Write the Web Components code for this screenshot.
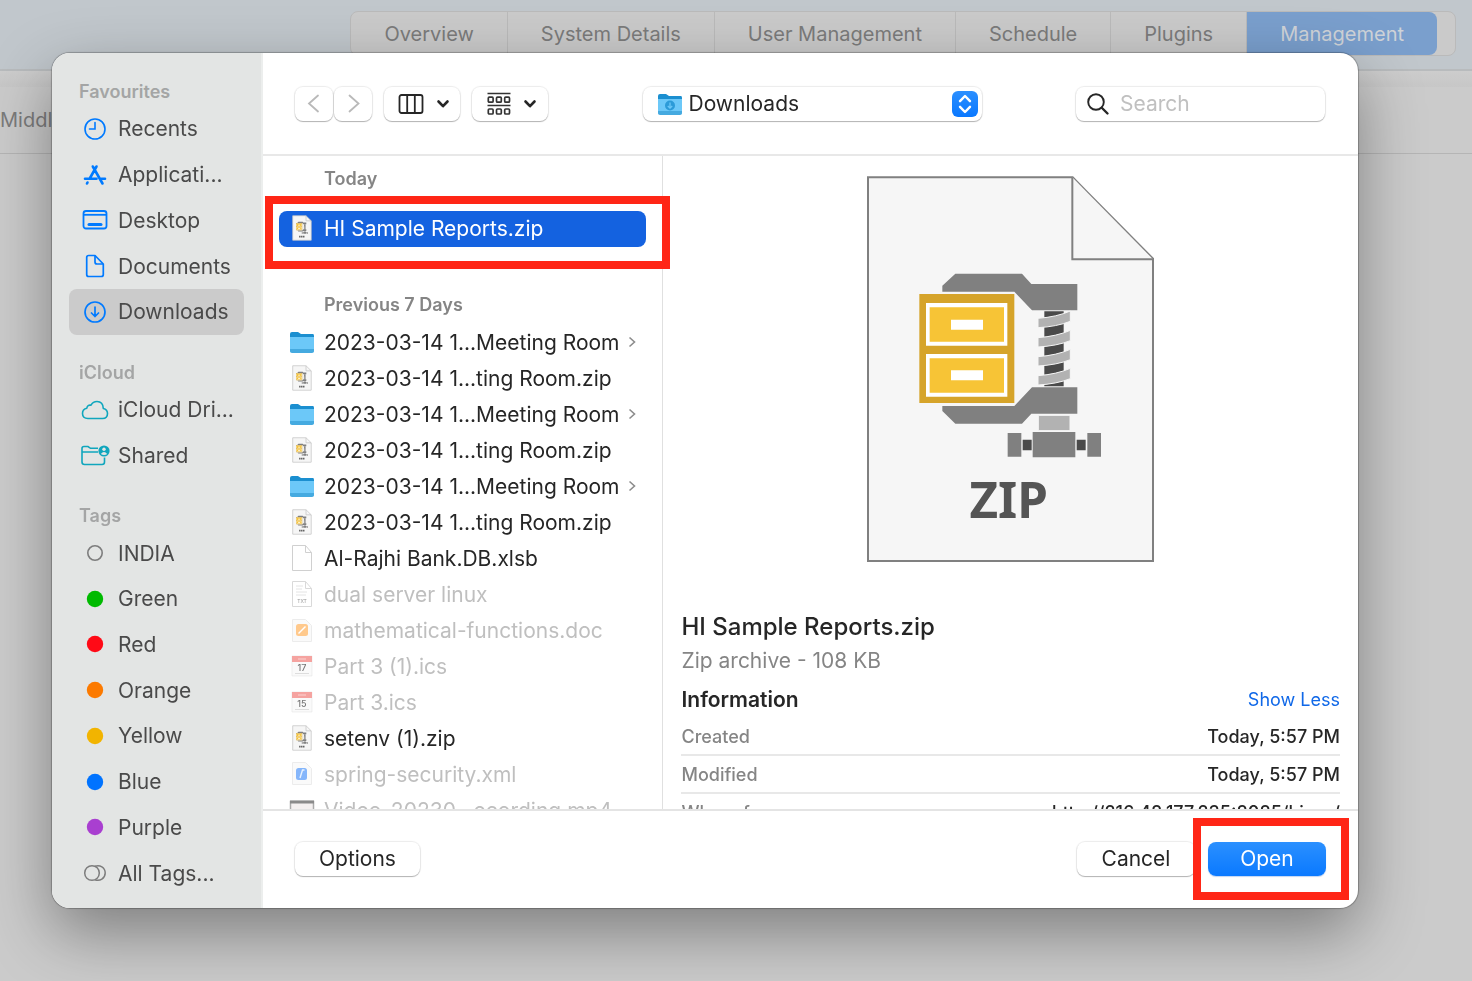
<!DOCTYPE html>
<html lang="en">
<head>
<meta charset="utf-8">
<title>Open file</title>
<style>
html, body {
  height: 100%;
}
body {
  margin: 0;
  background: #cbcbcb;
  font-family: Inter, "Liberation Sans", sans-serif;
  color: #262626;
  overflow: hidden;
}
</style>
</head>
<body>
<admin-page>
  <nav-tabs slot="tabs" tabs="Overview,System Details,User Management,Schedule,Plugins,Management" active="Management"></nav-tabs>
  <span slot="subtab">Middl</span>
</admin-page>

<open-dialog>
  <side-section slot="sidebar" heading="Favourites" rows="5">
    <side-item icon="clock">Recents</side-item>
    <side-item icon="apps">Applicati...</side-item>
    <side-item icon="desktop">Desktop</side-item>
    <side-item icon="document">Documents</side-item>
    <side-item icon="download" selected>Downloads</side-item>
  </side-section>
  <side-section slot="sidebar" heading="iCloud" rows="2">
    <side-item icon="cloud">iCloud Dri...</side-item>
    <side-item icon="shared">Shared</side-item>
  </side-section>
  <side-section slot="sidebar" heading="Tags" rows="8">
    <side-item icon="ring">INDIA</side-item>
    <side-item icon="dot" style="--dot: #00ba00">Green</side-item>
    <side-item icon="dot" style="--dot: #ff0a16">Red</side-item>
    <side-item icon="dot" style="--dot: #fc7a00">Orange</side-item>
    <side-item icon="dot" style="--dot: #f2b400">Yellow</side-item>
    <side-item icon="dot" style="--dot: #0073ff">Blue</side-item>
    <side-item icon="dot" style="--dot: #a93fd0">Purple</side-item>
    <side-item icon="rings">All Tags...</side-item>
  </side-section>

  <dialog-toolbar slot="toolbar"></dialog-toolbar>

  <file-group slot="files" heading="Today" spaced>
    <file-row icon="zip" selected>HI Sample Reports.zip</file-row>
  </file-group>
  <file-group slot="files" heading="Previous 7 Days">
    <file-row icon="folder" more>2023-03-14 1...Meeting Room</file-row>
    <file-row icon="zip">2023-03-14 1...ting Room.zip</file-row>
    <file-row icon="folder" more>2023-03-14 1...Meeting Room</file-row>
    <file-row icon="zip">2023-03-14 1...ting Room.zip</file-row>
    <file-row icon="folder" more>2023-03-14 1...Meeting Room</file-row>
    <file-row icon="zip">2023-03-14 1...ting Room.zip</file-row>
    <file-row icon="blank">Al-Rajhi Bank.DB.xlsb</file-row>
    <file-row icon="txt" disabled>dual server linux</file-row>
    <file-row icon="pages" disabled>mathematical-functions.doc</file-row>
    <file-row icon="cal17" disabled>Part 3 (1).ics</file-row>
    <file-row icon="cal15" disabled>Part 3.ics</file-row>
    <file-row icon="zip">setenv (1).zip</file-row>
    <file-row icon="xml" disabled>spring-security.xml</file-row>
    <file-row icon="video" disabled>Video_20230...ecording.mp4</file-row>
  </file-group>

  <file-preview slot="preview"></file-preview>

  <push-button slot="options">Options</push-button>
  <push-button slot="actions">Cancel</push-button>
  <push-button slot="actions" primary marked>Open</push-button>
</open-dialog>

<script>
// shared by the large preview and the list icons
const clamp = `
  <g fill="#808080">
    <path d="M249 346L288 310H488L516 341H654V420H518L465 364H249Z"/>
    <path d="M249 707H465L518 651H654V730H516L488 760H288L249 722Z"/>
    <path d="M520 785h128v76H520zM445 788h41v71h-41zM684 788h41v71h-41z"/>
  </g>
  <path fill="#4a4a4a" d="M555 423h58v225h-58zM490 808h27v32h-27zM652 808h27v32h-27z"/>
  <g fill="#b2b2b2" stroke="#f6f6f6" stroke-width="3">
    <path d="M536 444Q592 440 633 422V453Q592 469 536 472Z"/>
    <path d="M536 502Q592 498 633 480V511Q592 527 536 530Z"/>
    <path d="M536 559Q592 555 633 537V568Q592 584 536 587Z"/>
    <path d="M536 616Q592 612 633 594V625Q592 641 536 644Z"/>
    <path d="M537 735h95v46h-95z"/>
  </g>
  <path fill="#d6a42a" d="M180 371h285v327H180z"/>
  <path fill="#fff" d="M200 398h244v128H200zM200 551h244v128H200z"/>
  <path fill="#f7c436" d="M211 411h223v103H211zM211 564h223v103H211z"/>
  <path fill="#fff" d="M275 448h96v30h-96zM275 600h96v30h-96z"/>`;

const folder = `
  <path fill="#1b8fd0" d="M1 5q0-2 2-2h6l3 2h12q1 0 1 2v4H1z"/>
  <path fill="#6cc8f8" d="M1 8h24v14q0 1-1 1H2q-1 0-1-1z"/>
  <path fill="#45aae0" d="M1 20h24v2q0 2-2 2H3q-2 0-2-2z"/>`;

const sheet = `
  <path fill="#fff" stroke="#d0d0d0" d="M3.5 .5h13l6 7v18h-19z"/>
  <path fill="none" stroke="#d0d0d0" d="M16.500 .5v7h6"/>`;

const calendar = day => `
  <path fill="#fafafa" stroke="#e6e6e6" stroke-width=".6" d="M3 3h20v20H3z"/>
  <path fill="#f5a3a0" d="M3 3h20v6H3z"/>
  <path stroke="#fbd3d1" d="M9 6h8"/>
  <text x="13" y="18" font-size="9" font-weight="500" text-anchor="middle" fill="#777">${day}</text>
  <path stroke="#ddd" d="M6 20.500h14"/>`;

// name: [width, height, viewBox, markup]
const icons = {
  clock: [24, 24, '0 0 24 24', `<g fill="none" stroke="#007aff" stroke-width="1.600" stroke-linecap="round"><circle cx="12" cy="12" r="10"/><path d="M12 5.500V12H6.500"/></g>`],
  apps: [24, 24, '0 0 24 24', `<g fill="none" stroke="#007aff" stroke-width="2.600" stroke-linecap="round"><path d="M13.500 3.500L7 15M9.800 3.500L19.500 20.500M2 15.700H13.500M18.500 15.700H22M4.500 19.500L4 20.500"/></g>`],
  desktop: [26, 24, '0 0 26 24', `<g fill="none" stroke="#007aff" stroke-width="1.800"><rect x="1.500" y="3" width="23" height="17.500" rx="2.500"/><path d="M2 6.800h22"/><path stroke-width="3" stroke-linecap="round" d="M7 16.500h12"/></g>`],
  document: [24, 24, '0 0 24 24', `<g fill="none" stroke="#007aff" stroke-width="1.700" stroke-linejoin="round"><path d="M3.700 3.500q0-2 2-2H12L20.300 10V20.500q0 2-2 2H5.700q-2 0-2-2z"/><path d="M12 1.500V8q0 2 2 2h6"/></g>`],
  download: [24, 24, '0 0 24 24', `<g fill="none" stroke="#007aff" stroke-width="1.700" stroke-linecap="round" stroke-linejoin="round"><circle cx="12" cy="12" r="10"/><path d="M12 7v9.500M8.500 13l3.500 3.500 3.500-3.500"/></g>`],
  cloud: [28, 24, '0 0 28 24', `<path fill="none" stroke="#10a6bd" stroke-width="1.600" stroke-linejoin="round" d="M7 20.500Q1.500 20.500 1.500 15.500Q1.500 11 5.800 10.200Q6.500 6.500 10 7.200Q12 3.500 16 3.500Q22 3.500 22.300 10.500Q26.500 11.500 26.500 15.500Q26.500 20.500 21.500 20.500Z"/>`],
  shared: [30, 24, '0 0 30 24', `<g fill="none" stroke="#10a6bd" stroke-width="1.600"><path d="M24.500 14.500V19q0 2.500-2.500 2.500H4.500Q2 21.500 2 19V5.500Q2 3.500 4 3.500H8l2.500 1.800H18M2 9h16"/></g><circle cx="24" cy="8" r="5.600" fill="#10a6bd"/><circle cx="24" cy="6.300" r="1.700" fill="#e3e5e4"/><path fill="#e3e5e4" d="M20.800 11q3.200-4 6.400 0-3 2.200-6.400 0z"/>`],
  ring: [24, 24, '0 0 24 24', `<circle cx="12" cy="12" r="7.200" fill="none" stroke="#7d7d7d" stroke-width="1.600"/>`],
  dot: [24, 24, '0 0 24 24', `<circle cx="12" cy="12" r="8.200" fill="var(--dot)"/>`],
  rings: [24, 24, '0 0 24 24', `<g fill="none" stroke="#7d7d7d" stroke-width="1.500"><circle cx="9" cy="12" r="7.300"/><path d="M12 5.300a7.300 7.300 0 1 1 0 13.400"/></g>`],
  back: [16, 22, '0 0 16 22', `<path fill="none" stroke="#b9b9b9" stroke-width="1.800" stroke-linecap="round" d="M12 2.500L3 10.500l9 8"/>`],
  forward: [16, 22, '0 0 16 22', `<path fill="none" stroke="#b9b9b9" stroke-width="1.800" stroke-linecap="round" d="M4.500 2.500L13.500 10.500l-9 8"/>`],
  columns: [26, 22, '0 0 26 22', `<g fill="none" stroke="#262626" stroke-width="1.800"><rect x="1.500" y="2" width="23" height="18" rx="2"/><path d="M9.200 2v18M16.800 2v18"/></g>`],
  groups: [24, 24, '0 0 24 24', `<g fill="none" stroke="#333" stroke-width="1.700"><path d="M.5 1.500h23M.5 13.500h23"/><rect x="1.300" y="5.200" width="4.800" height="5" rx="1"/><rect x="9.500" y="5.200" width="4.800" height="5" rx="1"/><rect x="17.700" y="5.200" width="4.800" height="5" rx="1"/><rect x="1.300" y="17" width="4.800" height="5" rx="1"/><rect x="9.500" y="17" width="4.800" height="5" rx="1"/><rect x="17.700" y="17" width="4.800" height="5" rx="1"/></g>`],
  caret: [14, 10, '0 0 14 10', `<path fill="none" stroke="#262626" stroke-width="2.600" stroke-linecap="round" stroke-linejoin="round" d="M2.500 2.500L7 7.200l4.500-4.700"/>`],
  stepper: [26, 26, '0 0 26 26', `<defs><linearGradient id="s" x2="0" y2="1"><stop stop-color="#2b8fff"/><stop offset="1" stop-color="#0a78ff"/></linearGradient></defs><rect width="26" height="26" rx="6" fill="url(#s)"/><path fill="none" stroke="#fff" stroke-width="2.400" stroke-linecap="round" stroke-linejoin="round" d="M8 10.200L13 5l5 5.200M8 15.800L13 21l5-5.200"/>`],
  search: [24, 24, '0 0 24 24', `<g fill="none" stroke="#262626" stroke-linecap="round"><circle cx="10" cy="10" r="7.800" stroke-width="1.900"/><path stroke-width="2.400" d="M16 16l5.500 5.500"/></g>`],
  folder: [26, 26, '0 0 26 26', folder],
  downloads: [26, 26, '0 0 26 26', folder + `<circle cx="13" cy="14.500" r="5" fill="#2c9bd8"/><path fill="none" stroke="#6cc8f8" stroke-width="1.300" d="M13 11.500v5.500M10.800 15l2.200 2.200 2.200-2.200"/>`],
  zip: [26, 26, '-145 14 1200 1164', `<path fill="#f6f6f6" stroke="#c4c4c4" stroke-width="34" d="M26 30H640L881 265V1160H26Z"/><path fill="none" stroke="#c4c4c4" stroke-width="34" d="M640 30V265H881"/>${clamp}<path stroke="#666" stroke-width="80" stroke-dasharray="70 20" d="M320 990h260"/>`],
  blank: [26, 26, '0 0 26 26', sheet],
  txt: [26, 26, '0 0 26 26', `<g opacity=".8">${sheet}</g><path stroke="#e4e4e4" d="M7 5h7M7 8h6M7 11h11M7 14h10"/><text x="13" y="22" font-size="5" text-anchor="middle" fill="#999">TXT</text>`],
  pages: [26, 26, '0 0 26 26', `<path fill="#fafafa" stroke="#ececec" d="M3.500 2.500h13l6 6v16h-19z"/><rect x="7" y="7" width="12" height="12" rx="2.500" fill="#ffc98c"/><path stroke="#fff" stroke-width="1.400" d="M9.500 16.500l7-7"/>`],
  xml: [26, 26, '0 0 26 26', `<path fill="#fafafa" stroke="#ececec" d="M3.500 1.500h13l6 6v16h-19z"/><rect x="7" y="7" width="11" height="12" rx="2.500" fill="#85b6fb"/><path fill="none" stroke="#e8f2ff" stroke-width="1.400" d="M11 17l2.500-8h2"/>`],
  cal17: [26, 26, '0 0 26 26', calendar(17)],
  cal15: [26, 26, '0 0 26 26', calendar(15)],
  video: [26, 26, '0 0 26 26', `<path fill="#f4f0f0" stroke="#aaa" stroke-width="1.500" d="M1.500 4.500h23v18h-23z"/><path stroke="#8a8a8a" stroke-width="3" d="M1 5h24"/>`],
  chevron: [8, 12, '0 0 8 12', `<path fill="none" stroke="#8c8c8c" stroke-width="1.600" d="M1.500 1.500L6.500 6l-5 4.500"/>`],
  archive: [290, 388, '20 14 870 1164', `<g fill="#f6f6f6" stroke="#808080" stroke-width="6"><path d="M26 21H640L881 265V1172H26Z"/><path d="M639 21V267H881"/></g>${clamp}<text x="448" y="1043" font-family="Noto Sans, sans-serif" font-weight="700" font-size="148" text-anchor="middle" fill="#555">ZIP</text>`]
};

function icon(name) {
  const [width, height, box, body] = icons[name];
  return `<svg width="${width}" height="${height}" viewBox="${box}" aria-hidden="true">${body}</svg>`;
}

class BaseElement extends HTMLElement {
  connectedCallback() {
    if (this.shadowRoot) return;
    this.attachShadow({ mode: 'open' });
    this.shadowRoot.innerHTML = `<style>
      * { box-sizing: border-box; }
      svg { display: block; flex: none; }
      button { font: inherit; color: inherit; }
      ${this.css()}
    </style>${this.html()}`;
  }
}

class AdminPage extends BaseElement {
  css() {
    return `
      :host { display: block; color: #7b7b7b; font-size: 20px; }
      header {
        display: flex;
        justify-content: flex-end;
        height: 71px;
        padding: 11px 16px 0 0;
        background: #c1c7cc;
        border-bottom: 2px solid #b8bbbd;
      }
      .strip { height: 16px; background: linear-gradient(#cdcdcd, #c7c7c7); }
      .sub {
        display: flex;
        align-items: center;
        height: 67px;
        background: #cbcbcb;
        border-bottom: 1px solid #b5b5b5;
      }`;
  }

  html() {
    return `<header><slot name="tabs"></slot></header>
      <div class="strip"></div>
      <div class="sub"><slot name="subtab"></slot></div>`;
  }
}

class NavTabs extends BaseElement {
  css() {
    return `
      :host { display: block; }
      nav {
        display: flex;
        height: 45px;
        padding-right: 18px;
        border: 1px solid #bababa;
        border-radius: 8px;
        background: #cacaca;
      }
      a {
        display: flex;
        align-items: center;
        padding: 0 33px;
        border-right: 1px solid #bababa;
        color: inherit;
        text-decoration: none;
        white-space: nowrap;
      }
      a[aria-current] {
        background: #7a9fcd;
        color: #cfd3d8;
        border: 0;
        border-radius: 0 8px 8px 0;
      }`;
  }

  html() {
    const active = this.getAttribute('active');
    return `<nav>${this.getAttribute('tabs')
      .split(',')
      .map(t => `<a href="#"${t === active ? ' aria-current="page"' : ''}>${t}</a>`)
      .join('')}</nav>`;
  }
}

class OpenDialog extends BaseElement {
  css() {
    return `
      :host {
        position: fixed;
        inset: 0;
        display: flex;
        padding: 53px 114px 73px 52px;
        box-sizing: border-box;
      }
      .window {
        flex: 1;
        display: flex;
        min-width: 0;
        border-radius: 18px;
        overflow: hidden;
        background: #fff;
        box-shadow: 0 0 1px 1px rgba(0, 0, 0, .25), 0 24px 64px rgba(0, 0, 0, .38);
      }
      aside {
        flex: 0 0 211px;
        display: flex;
        flex-direction: column;
        gap: 24px;
        padding: 25px 17px 12px;
        background: #e3e5e4;
        border-right: 2px solid #eceeed;
      }
      main { flex: 1; min-width: 0; display: flex; flex-direction: column; }
      .toolbar { border-bottom: 2px solid #e8e8e8; }
      .content { flex: 1; min-height: 0; display: flex; overflow: hidden; }
      .files {
        flex: 0 0 399px;
        padding: 3px 16px 0;
        border-right: 1px solid #e0e0e0;
      }
      .preview { flex: 1; min-width: 0; }
      footer {
        display: flex;
        align-items: center;
        gap: 13px;
        height: 99px;
        padding: 0 32px 2px;
        border-top: 2px solid #e4e4e4;
      }
      .space { flex: 1; }`;
  }

  html() {
    return `<div class="window" role="dialog" aria-label="Open">
      <aside><slot name="sidebar"></slot></aside>
      <main>
        <div class="toolbar"><slot name="toolbar"></slot></div>
        <div class="content">
          <div class="files"><slot name="files"></slot></div>
          <div class="preview"><slot name="preview"></slot></div>
        </div>
        <footer>
          <slot name="options"></slot>
          <div class="space"></div>
          <slot name="actions"></slot>
        </footer>
      </main>
    </div>`;
  }
}

class SideSection extends BaseElement {
  css() {
    return `
      :host {
        display: flex;
        flex-direction: column;
        flex: ${this.getAttribute('rows')} 0 auto;
      }
      h2 {
        margin: 0;
        padding-left: 10px;
        font-size: 18px;
        font-weight: 600;
        line-height: 28px;
        color: #a4a5a5;
      }`;
  }

  html() {
    return `<h2>${this.getAttribute('heading')}</h2><slot></slot>`;
  }
}

class SideItem extends BaseElement {
  css() {
    return `
      :host { display: flex; flex: 1 0 45px; }
      a {
        flex: 1;
        display: flex;
        align-items: center;
        gap: 8px;
        padding-left: 11px;
        border-radius: 8px;
        color: #4a4a4a;
        font-size: 21px;
        text-decoration: none;
        white-space: nowrap;
      }
      :host([selected]) a { background: #cbcbcb; }
      .icon { flex: none; width: 30px; display: flex; justify-content: center; }`;
  }

  html() {
    return `<a href="#"><span class="icon">${icon(this.getAttribute('icon'))}</span><slot></slot></a>`;
  }
}

class DialogToolbar extends BaseElement {
  css() {
    return `
      :host {
        display: flex;
        align-items: center;
        justify-content: space-between;
        height: 101px;
        padding: 0 33px 0 32px;
        box-sizing: border-box;
      }
      .left { display: flex; gap: 12px; }
      .pair { display: flex; gap: 1px; }
      button, .popup, .search {
        display: flex;
        align-items: center;
        justify-content: center;
        height: 34px;
        border: 0;
        padding: 0;
        border-radius: 8px;
        background: #fff;
        box-shadow: 0 0 1px 1px rgba(0, 0, 0, .08), 0 1px 1px rgba(0, 0, 0, .25);
      }
      .pair button { width: 38px; }
      .menu { gap: 12px; width: 76px; padding-left: 4px; }
      .popup {
        gap: 6px;
        width: 339px;
        padding: 0 4px 0 14px;
      }
      select {
        flex: 1;
        appearance: none;
        border: 0;
        padding: 0;
        background: none;
        font: inherit;
        font-size: 21px;
        color: inherit;
        outline: 0;
      }
      .search { gap: 10px; width: 249px; padding: 0 10px; }
      input {
        flex: 1;
        min-width: 0;
        border: 0;
        padding: 0;
        background: none;
        font: inherit;
        font-size: 21px;
        outline: 0;
      }
      input::placeholder { color: #c0c0c0; }`;
  }

  html() {
    return `<div class="left">
        <div class="pair">
          <button aria-label="Back">${icon('back')}</button>
          <button aria-label="Forward">${icon('forward')}</button>
        </div>
        <button class="menu" aria-label="View">${icon('columns')}${icon('caret')}</button>
        <button class="menu" aria-label="Group">${icon('groups')}${icon('caret')}</button>
      </div>
      <label class="popup">${icon('downloads')}
        <select aria-label="Folder"><option>Downloads</option></select>
        ${icon('stepper')}</label>
      <label class="search">${icon('search')}
        <input type="text" placeholder="Search" aria-label="Search"></label>`;
  }
}

class FileGroup extends BaseElement {
  css() {
    return `
      :host { display: block; }
      :host([spaced]) { margin-bottom: 38px; }
      :host([spaced]) h3 { margin-bottom: 12px; }
      h3 {
        margin: 0;
        padding-left: 45px;
        font-size: 18px;
        font-weight: 600;
        line-height: 40px;
        color: #858585;
      }`;
  }

  html() {
    return `<h3>${this.getAttribute('heading')}</h3><slot></slot>`;
  }
}

class FileRow extends BaseElement {
  css() {
    return `
      :host { display: block; position: relative; }
      button {
        display: flex;
        align-items: center;
        gap: 9px;
        width: 100%;
        height: 36px;
        padding: 0 10px 2px;
        border: 0;
        border-radius: 8px;
        background: none;
        font-size: 21px;
        white-space: nowrap;
      }
      .name { flex: 1; text-align: left; }
      :host([disabled]) button { color: #bfbfbf; }
      :host([selected]) button { background: #1462e0; color: #fff; }
      mark-box { inset: -15px -24px -22px -14px; }`;
  }

  html() {
    return `<button${this.hasAttribute('disabled') ? ' disabled' : ''}>
      ${icon(this.getAttribute('icon'))}
      <span class="name"><slot></slot></span>
      ${this.hasAttribute('more') ? icon('chevron') : ''}
    </button>${this.hasAttribute('selected') ? '<mark-box></mark-box>' : ''}`;
  }
}

// red frame drawn over whatever it surrounds
class MarkBox extends BaseElement {
  css() {
    return `
      :host {
        position: absolute;
        z-index: 1;
        border: 8px solid #ff2616;
        pointer-events: none;
      }`;
  }

  html() {
    return '';
  }
}

class FilePreview extends BaseElement {
  css() {
    return `
      :host { display: block; padding: 19px 18px 0; }
      svg { margin: 0 auto 46px; }
      h1 { margin: 0; font-size: 24px; font-weight: 500; line-height: 36px; }
      p { margin: 0 0 3px; font-size: 21px; line-height: 32px; color: #858585; }
      .info {
        display: flex;
        justify-content: space-between;
        align-items: center;
        height: 38px;
      }
      h2 { margin: 0; font-size: 21px; font-weight: 600; }
      a { font-size: 18px; color: #1068e8; text-decoration: none; }
      dl { margin: 0; font-size: 18px; font-weight: 500; }
      dl div {
        display: flex;
        justify-content: space-between;
        align-items: center;
        height: 38px;
        border-bottom: 2px solid #e8e8e8;
      }
      dt { color: #858585; }
      dd { margin: 0; }`;
  }

  html() {
    return `${icon('archive')}
      <h1>HI Sample Reports.zip</h1>
      <p>Zip archive - 108 KB</p>
      <div class="info"><h2>Information</h2><a href="#">Show Less</a></div>
      <dl>
        <div><dt>Created</dt><dd>Today, 5:57 PM</dd></div>
        <div><dt>Modified</dt><dd>Today, 5:57 PM</dd></div>
        <div><dt>Where from</dt><dd>http://216.48.177.235:8085/hi-ee/</dd></div>
      </dl>`;
  }
}

class PushButton extends BaseElement {
  css() {
    return `
      :host { display: block; position: relative; }
      button {
        height: 34px;
        min-width: 118px;
        padding: 0 24px;
        border: 0;
        border-radius: 8px;
        background: #fff;
        font-size: 21px;
        box-shadow: 0 0 1px 1px rgba(0, 0, 0, .08), 0 1px 1px rgba(0, 0, 0, .25);
      }
      :host([primary]) button {
        background: linear-gradient(#2b90ff, #0a79ff);
        color: #fff;
        box-shadow: 0 1px 1px rgba(0, 80, 200, .25);
      }
      mark-box { inset: -24px -23px -24px -15px; }`;
  }

  html() {
    return `<button><slot></slot></button>${this.hasAttribute('marked') ? '<mark-box></mark-box>' : ''}`;
  }
}

customElements.define('mark-box', MarkBox);
customElements.define('admin-page', AdminPage);
customElements.define('nav-tabs', NavTabs);
customElements.define('open-dialog', OpenDialog);
customElements.define('side-section', SideSection);
customElements.define('side-item', SideItem);
customElements.define('dialog-toolbar', DialogToolbar);
customElements.define('file-group', FileGroup);
customElements.define('file-row', FileRow);
customElements.define('file-preview', FilePreview);
customElements.define('push-button', PushButton);
</script>
</body>
</html>
